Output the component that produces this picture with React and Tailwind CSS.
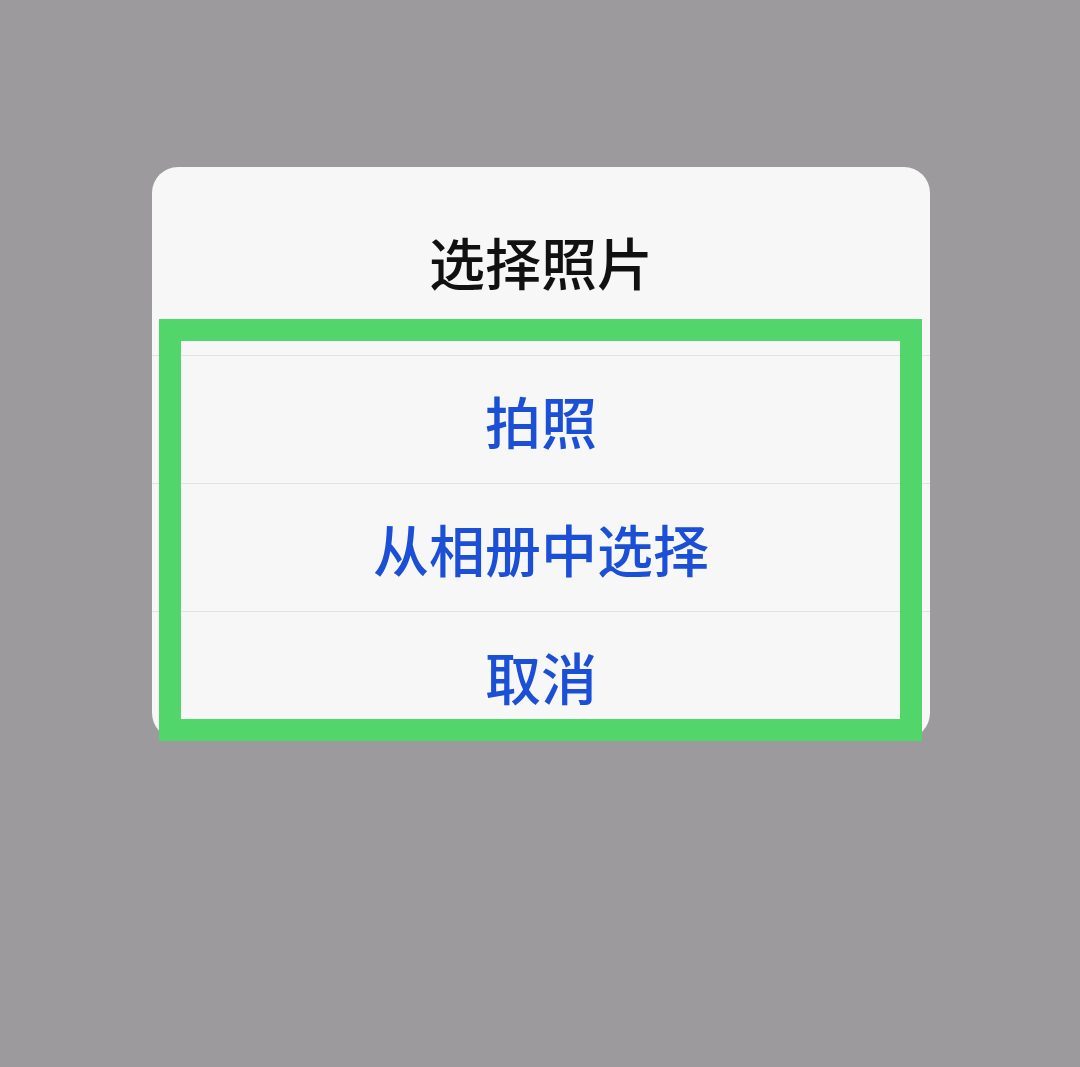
export default function App() {
  const options = ["拍照", "从相册中选择", "取消"];

  return (
    <div
      className="w-[1080px] h-[1067px] bg-[#9c9a9d] pt-[167px] pl-[152px]"
      style={{ fontFamily: '"Noto Sans CJK SC", "Noto Sans", sans-serif' }}
    >
      <div className="relative w-[778px] bg-[#f7f7f7] rounded-[26px]">
        {/* Title */}
        <div className="h-[188px] flex items-center justify-center">
          <span className="text-[56px] font-medium text-[#111111] leading-none">选择照片</span>
        </div>

        {/* Options */}
        <div className="flex flex-col">
          {options.map((label) => (
            <div
              key={label}
              className="h-[128px] border-t border-[#e2e1e6] flex items-center justify-center"
            >
              <span className="text-[56px] font-medium text-[#1a4fd6] leading-none">{label}</span>
            </div>
          ))}
        </div>

        {/* Highlight overlay */}
        <div className="absolute left-[7px] top-[152px] w-[763px] h-[422px] border-[22px] border-[#52d56a] pointer-events-none" />
      </div>
    </div>
  );
}
